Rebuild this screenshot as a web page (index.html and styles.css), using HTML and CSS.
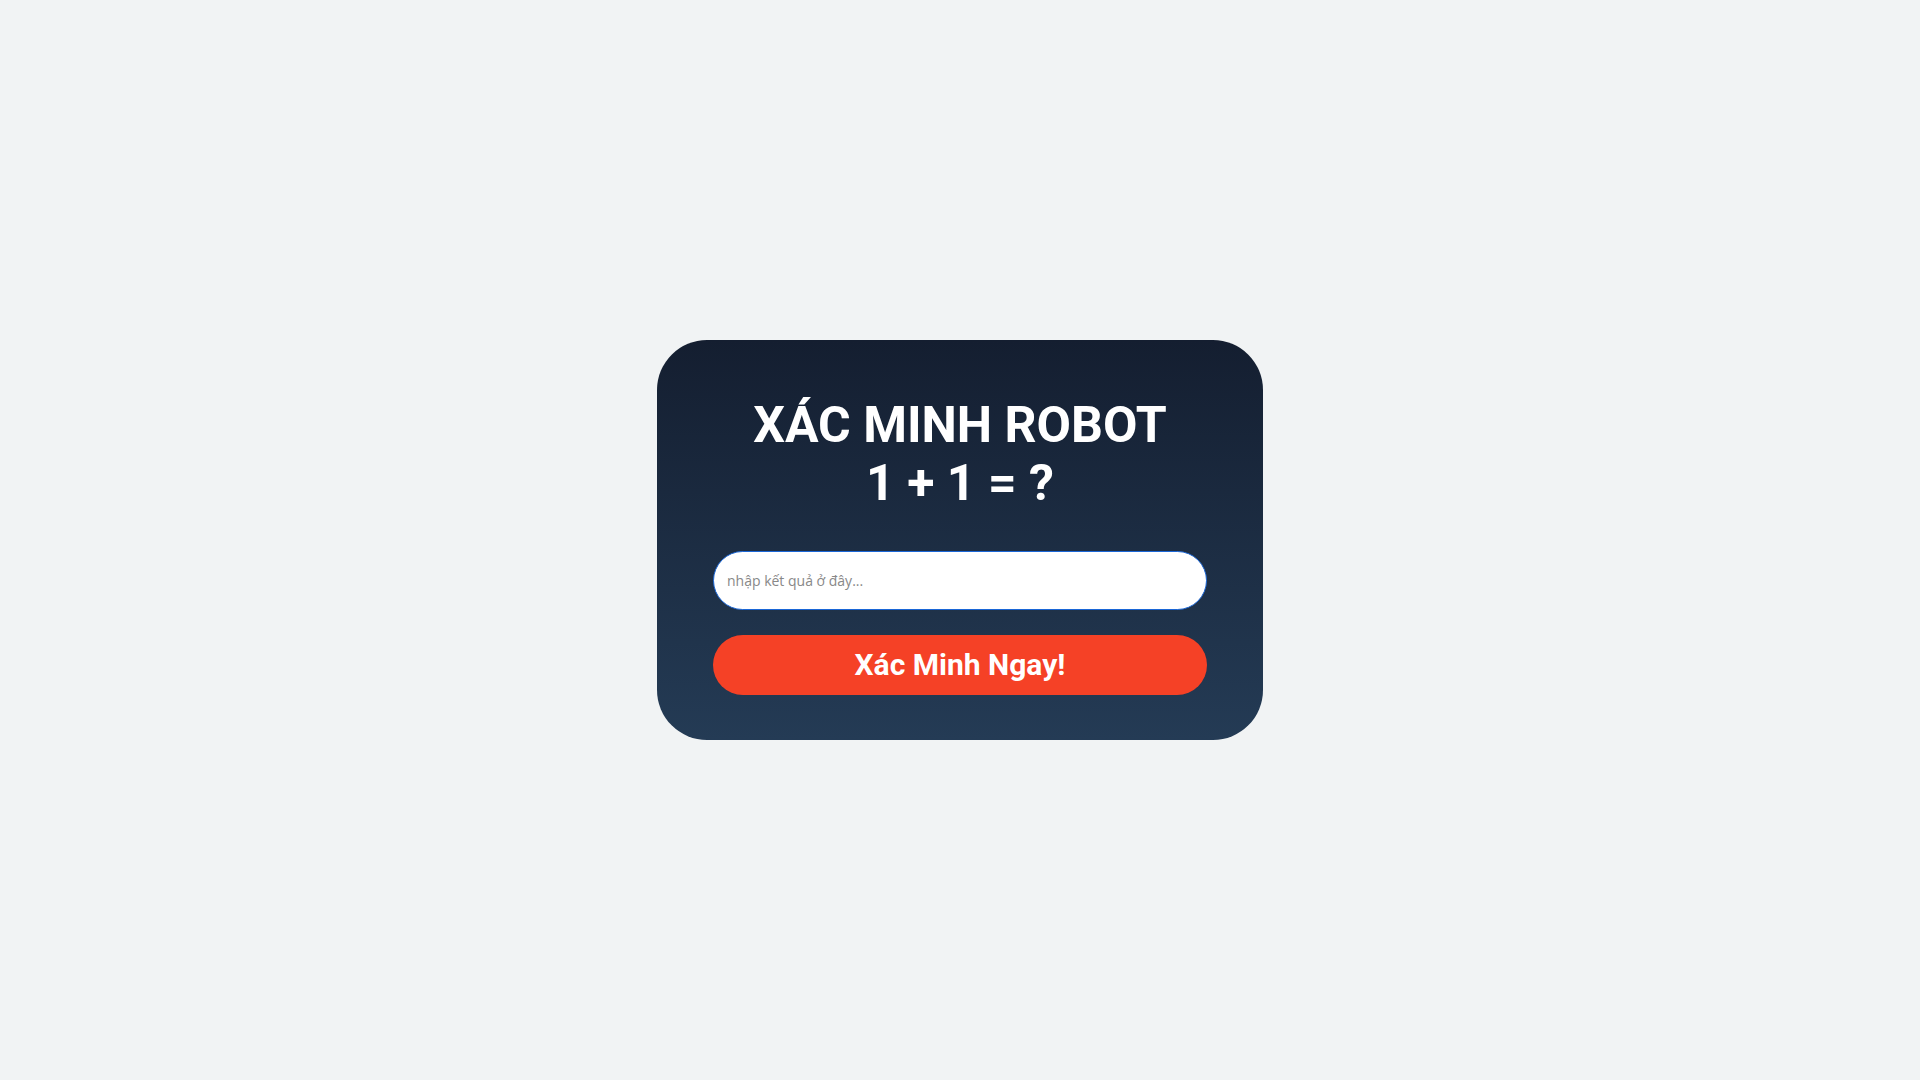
FILE: index.html
```
<!DOCTYPE html>
<html lang="vi">
  <head>
    <meta charset="UTF-8" />
    <meta name="viewport" content="width=device-width, initial-scale=1.0" />
    <title>Xác minh robot</title>
    <link rel="stylesheet" href="styles.css">
  </head>

  <body>
    <form class="card">
      <h1><label for="result">XÁC MINH ROBOT<br />1 + 1 = ?</label></h1>
      <input type="text" id="result" name="result" placeholder="nhập kết quả ở đây..." autocomplete="off" />
      <button type="submit">Xác Minh Ngay!</button>
    </form>
  </body>
</html>
```

FILE: styles.css
```
* {
  box-sizing: border-box;
}

body {
  margin: 0;
  min-height: 100vh;
  display: flex;
  align-items: center;
  justify-content: center;
  background-color: #f1f3f4;
  font-family: Roboto, sans-serif;
}

.card {
  display: flex;
  flex-direction: column;
  width: 100%;
  max-width: 606px;
  padding: 56px 56px 45px;
  border-radius: 50px;
  background: linear-gradient(#141e30, #243b55);
}

h1 {
  margin: 0 0 39px;
  color: #fff;
  font-size: 50px;
  line-height: 58px;
  text-align: center;
}

input {
  width: 100%;
  height: 59px;
  margin-bottom: 25px;
  padding: 0 13px;
  border: 1px solid #1a66d6;
  border-radius: 30px;
  background-color: #fff;
  color: #222;
  font-family: "Open Sans", sans-serif;
  font-size: 14px;
}

input::placeholder {
  color: #888;
}

button {
  width: 100%;
  height: 60px;
  padding: 0 0 2px;
  border: none;
  border-radius: 30px;
  background-color: #f54126;
  color: #fff;
  font-family: Roboto, sans-serif;
  font-size: 30px;
  font-weight: bold;
  cursor: pointer;
}

button:hover {
  background-color: #dd361e;
}
```
